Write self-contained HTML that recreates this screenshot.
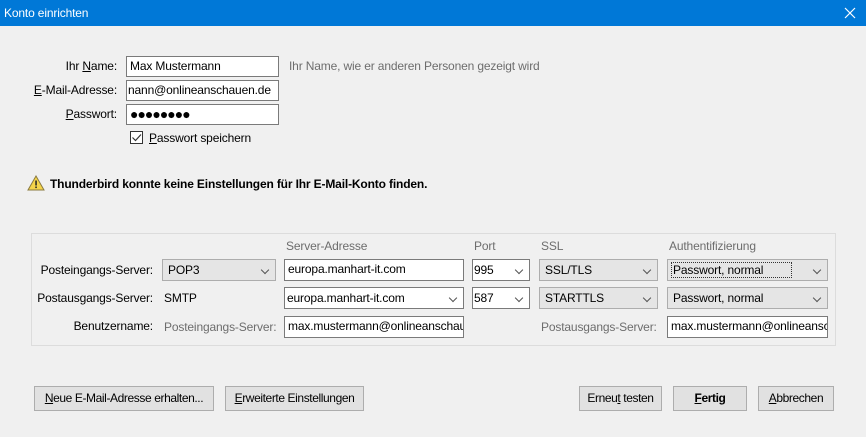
<!DOCTYPE html>
<html><head><meta charset="utf-8"><style>
*{box-sizing:border-box;margin:0;padding:0}
body{width:866px;height:437px;background:#f0f0f0;font-family:"Liberation Sans",sans-serif;font-size:12px;letter-spacing:-0.15px;color:#000;position:relative;overflow:hidden}
.a{position:absolute;white-space:nowrap}
.title{left:0;top:0;width:866px;height:26px;background:#0078d7;color:#fff;font-size:12px;line-height:26px;padding-left:4px}
.lbl{text-align:right;line-height:20px}
.inp{background:#fff;border:1px solid #7a7a7a;height:21px;line-height:19px;padding-left:3px;overflow:hidden}
.sel{background:#e5e5e5;border:1px solid #adadad;height:22px;line-height:20px;padding-left:5px;overflow:hidden}
.cmb{background:#fff;border:1px solid #7a7a7a;height:22px;line-height:20px;padding-left:1px;overflow:hidden}
.arr{position:absolute;right:7px;top:7px;width:6px;height:6px;border-right:1px solid #555;border-bottom:1px solid #555;transform:rotate(45deg)}
.gray{color:#6d6d6d}
.btn{background:#e1e1e1;border:1px solid #adadad;height:25px;line-height:23px;text-align:center;font-size:12px;letter-spacing:-0.4px}
u{text-decoration:underline}
</style></head><body>
<div class="a title">Konto einrichten</div>
<svg class="a" style="left:844px;top:7px" width="12" height="12"><path d="M1 1L11 11M11 1L1 11" stroke="#fff" stroke-width="1.2"/></svg>

<div class="a lbl" style="right:749px;top:56px">Ihr <u>N</u>ame:</div>
<div class="a inp" style="left:126px;top:56px;width:153px">Max Mustermann</div>
<div class="a gray" style="left:289px;top:59px">Ihr Name, wie er anderen Personen gezeigt wird</div>
<div class="a lbl" style="right:749px;top:80px"><u>E</u>-Mail-Adresse:</div>
<div class="a inp" style="left:126px;top:80px;width:153px;padding-left:1px">nann@onlineanschauen.de</div>
<div class="a lbl" style="right:749px;top:104px"><u>P</u>asswort:</div>
<div class="a inp" style="left:126px;top:104px;width:153px;font-size:14px;letter-spacing:-1px">●●●●●●●●</div>
<div class="a" style="left:130px;top:131px;width:13px;height:13px;border:1px solid #333;background:#fff"></div>
<svg class="a" style="left:131px;top:132px" width="11" height="11"><path d="M1.5 5.5L4.5 8.5L10 2.5" stroke="#333" fill="none" stroke-width="1.2"/></svg>
<div class="a" style="left:149px;top:131px"><u>P</u>asswort speichern</div>

<svg class="a" style="left:27px;top:175px" width="18" height="16"><path d="M9 1L17 15H1Z" fill="#f5d44a" stroke="#8a7a40" stroke-width="1"/><rect x="8.3" y="5.5" width="1.5" height="5" fill="#222"/><rect x="8.3" y="11.5" width="1.5" height="1.6" fill="#222"/></svg>
<div class="a" style="left:50px;top:177px;font-weight:bold">Thunderbird konnte keine Einstellungen für Ihr E-Mail-Konto finden.</div>

<div class="a" style="left:31px;top:233px;width:805px;height:113px;border:1px solid #dcdcdc"></div>
<div class="a gray" style="left:286px;top:239px">Server-Adresse</div>
<div class="a gray" style="left:474px;top:239px">Port</div>
<div class="a gray" style="left:541px;top:239px">SSL</div>
<div class="a gray" style="left:669px;top:239px">Authentifizierung</div>

<div class="a lbl" style="right:713px;top:260px">Posteingangs-Server:</div>
<div class="a sel" style="left:162px;top:259px;width:114px">POP3<span class="arr"></span></div>
<div class="a inp" style="left:284px;top:259px;width:180px;height:22px">europa.manhart-it.com</div>
<div class="a cmb" style="left:472px;top:259px;width:58px">995<span class="arr"></span></div>
<div class="a sel" style="left:539px;top:259px;width:119px">SSL/TLS<span class="arr"></span></div>
<div class="a sel" style="left:667px;top:259px;width:161px;padding-left:4px"><span style="outline:1px dotted #333;padding:0 28px 0 1px">Passwort, normal</span><span class="arr"></span></div>

<div class="a lbl" style="right:713px;top:288px">Postausgangs-Server:</div>
<div class="a" style="left:164px;top:291px">SMTP</div>
<div class="a cmb" style="left:284px;top:287px;width:180px;padding-left:2px">europa.manhart-it.com<span class="arr"></span></div>
<div class="a cmb" style="left:472px;top:287px;width:58px">587<span class="arr"></span></div>
<div class="a sel" style="left:539px;top:287px;width:119px">STARTTLS<span class="arr"></span></div>
<div class="a sel" style="left:667px;top:287px;width:161px">Passwort, normal<span class="arr"></span></div>

<div class="a lbl" style="right:713px;top:316px">Benutzername:</div>
<div class="a gray" style="left:164px;top:320px">Posteingangs-Server:</div>
<div class="a inp" style="left:284px;top:316px;width:180px;height:22px">max.mustermann@onlineanschauen.de</div>
<div class="a gray" style="left:541px;top:320px">Postausgangs-Server:</div>
<div class="a inp" style="left:667px;top:316px;width:161px;height:22px">max.mustermann@onlineanschauen.de</div>

<div class="a btn" style="left:34px;top:386px;width:180px"><u>N</u>eue E-Mail-Adresse erhalten...</div>
<div class="a btn" style="left:225px;top:386px;width:139px"><u>E</u>rweiterte Einstellungen</div>
<div class="a btn" style="left:579px;top:386px;width:83px">Erneu<u>t</u> testen</div>
<div class="a btn" style="left:673px;top:386px;width:74px;font-weight:bold"><u>F</u>ertig</div>
<div class="a btn" style="left:758px;top:386px;width:76px"><u>A</u>bbrechen</div>
</body></html>
